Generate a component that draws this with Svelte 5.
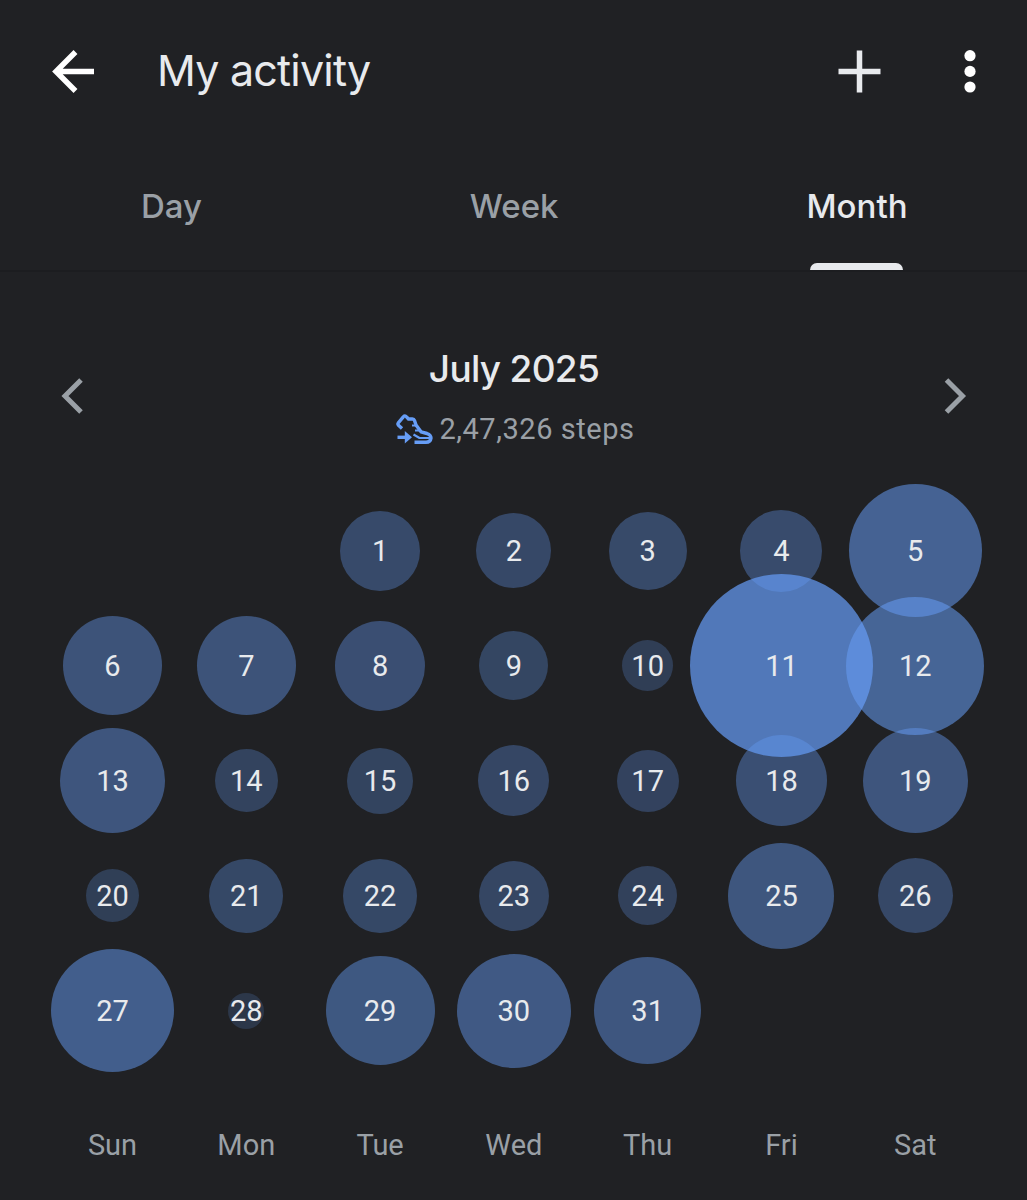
<script>
  const tabs = ["Day", "Week", "Month"];
  const weekdays = ["Sun", "Mon", "Tue", "Wed", "Thu", "Fri", "Sat"];

  // bubble diameter for each day of the month, in px
  const sizes = [
    80, 75, 78, 82, 133, 99, 99, 90, 69, 51, 183, 138, 105, 63, 66, 71, 62, 91,
    105, 53, 74, 74, 70, 59, 106, 75, 123, 36, 109, 114, 107,
  ];
  const firstWeekday = 2;

  const days = sizes.map((size, i) => ({
    day: i + 1,
    size,
    alpha: 0.05 + size * 0.0036,
  }));

  let activeTab = "Month";
</script>

<div class="screen">
  <header>
    <button class="back" aria-label="Back">
      <svg width="44" height="44" viewBox="0 0 44 44">
        <path d="M43 22.5H5M24.5 3L5 22.5L24.5 42" />
      </svg>
    </button>
    <h1>My activity</h1>
    <button class="add" aria-label="Add">
      <svg width="44" height="44" viewBox="0 0 44 44">
        <path d="M21.5 1.5V43.5M0.5 22.5H42.5" />
      </svg>
    </button>
    <button class="more" aria-label="More">
      <svg width="12" height="44" viewBox="0 0 12 44">
        <circle cx="6" cy="6.7" r="5.6" />
        <circle cx="6" cy="22.4" r="5.6" />
        <circle cx="6" cy="38" r="5.6" />
      </svg>
    </button>
  </header>

  <nav>
    {#each tabs as tab}
      <button
        class="tab"
        class:active={tab === activeTab}
        on:click={() => (activeTab = tab)}
      >
        <span>{tab}</span>
      </button>
    {/each}
  </nav>

  <section class="summary">
    <button class="arrow" aria-label="Previous month">
      <svg width="24" height="36" viewBox="0 0 24 36">
        <path d="M21 2L5 18L21 34" />
      </svg>
    </button>
    <div class="total">
      <h2>July 2025</h2>
      <p>
        <svg class="shoe" width="38" height="32" viewBox="0 0 38 32">
          <path
            d="M7 15.5L3.2 12Q2.4 11 3.2 10L8.3 3.8Q10 2 11.5 3.8L13.5 6H17.5Q19 6 19.5 7.5L21 12L26 18.8L32 20.5Q36 22 36 25Q35.5 29.3 31 29.3H19.5"
          />
          <path class="thin" d="M17 12.5H22M20 17.5H25" />
          <path class="thin" d="M18.5 21.5L24.5 25H35" />
          <path d="M2.5 24.3H11" />
          <path class="fill" d="M9.8 18L17 24.3L9.8 30.6Z" />
        </svg>
        <span>2,47,326 steps</span>
      </p>
    </div>
    <button class="arrow" aria-label="Next month">
      <svg width="24" height="36" viewBox="0 0 24 36">
        <path d="M2.5 2L18.5 18L2.5 34" />
      </svg>
    </button>
  </section>

  <div class="calendar">
    {#each Array(firstWeekday) as _}
      <div class="cell"></div>
    {/each}
    {#each days as { day, size, alpha }}
      <div class="cell">
        <div
          class="bubble"
          style={`width: ${size}px; height: ${size}px; background-color: rgba(102, 157, 246, ${alpha})`}
        >
          {day}
        </div>
      </div>
    {/each}
  </div>

  <div class="weekdays">
    {#each weekdays as name}
      <span>{name}</span>
    {/each}
  </div>
</div>

<style>
  :global(body) {
    margin: 0;
    background-color: #202124;
  }

  .screen {
    width: 1027px;
    height: 1200px;
    overflow: hidden;
    background-color: #202124;
    color: #e8eaed;
    font-family: Roboto, sans-serif;
  }

  button {
    border: none;
    padding: 0;
    background: none;
    color: inherit;
    font: inherit;
    display: flex;
  }

  svg {
    display: block;
    fill: none;
    stroke: currentColor;
  }

  header {
    display: flex;
    align-items: center;
    box-sizing: border-box;
    height: 142px;
    padding: 0 51px;
  }

  .back {
    color: #fff;
    stroke-width: 5.5;
  }

  .add {
    margin-left: auto;
    stroke-width: 5.5;
  }

  .more {
    margin: 0 0 0 82px;
    color: #fff;
  }

  .more svg {
    fill: currentColor;
    stroke: none;
  }

  h1 {
    margin: 0 0 3px 62px;
    font-family: Inter, sans-serif;
    font-size: 43px;
    font-weight: 400;
    letter-spacing: -0.8px;
    line-height: 56px;
  }

  nav {
    display: grid;
    grid-template-columns: repeat(3, 342.8px);
    height: 128px;
    border-bottom: 2px solid #1c1d20;
  }

  .tab {
    flex-direction: column;
    align-items: center;
    padding-top: 42px;
    color: #9aa0a6;
    font-family: Inter, sans-serif;
    font-size: 33px;
    font-weight: 500;
    line-height: 44px;
  }

  .active {
    color: #e8eaed;
  }

  .active::after {
    content: "";
    width: 93px;
    height: 7px;
    margin-top: 35px;
    border-radius: 7px 7px 0 0;
    background-color: #e8eaed;
  }

  .summary {
    display: flex;
    justify-content: space-between;
    box-sizing: border-box;
    height: 221px;
    padding: 71px 59px 0 60px;
  }

  .arrow {
    margin-top: 35px;
    align-self: flex-start;
    color: #9aa0a6;
    stroke-width: 5;
  }

  .total {
    text-align: center;
  }

  h2 {
    margin: 0;
    font-family: Inter, sans-serif;
    font-size: 37px;
    font-weight: 500;
    line-height: 52px;
    letter-spacing: -0.7px;
  }

  p {
    display: flex;
    align-items: center;
    justify-content: center;
    gap: 6px;
    margin: 14px 0 0 2px;
    color: #9aa0a6;
    font-size: 29px;
    line-height: 40px;
    letter-spacing: 0.55px;
  }

  .shoe {
    color: #669df6;
    stroke-width: 3.4;
    stroke-linejoin: round;
  }

  .thin {
    stroke-width: 2.2;
  }

  .fill {
    fill: currentColor;
    stroke: none;
  }

  .calendar,
  .weekdays {
    display: grid;
    grid-template-columns: repeat(7, 133.8px);
    margin-left: 45.6px;
  }

  .calendar {
    grid-auto-rows: 115.1px;
  }

  .cell,
  .bubble {
    display: flex;
    align-items: center;
    justify-content: center;
  }

  .bubble {
    flex-shrink: 0;
    border-radius: 50%;
    font-size: 29px;
  }

  .weekdays {
    margin-top: 57px;
    color: #9aa0a6;
    font-size: 29px;
    line-height: 40px;
    text-align: center;
  }
</style>
